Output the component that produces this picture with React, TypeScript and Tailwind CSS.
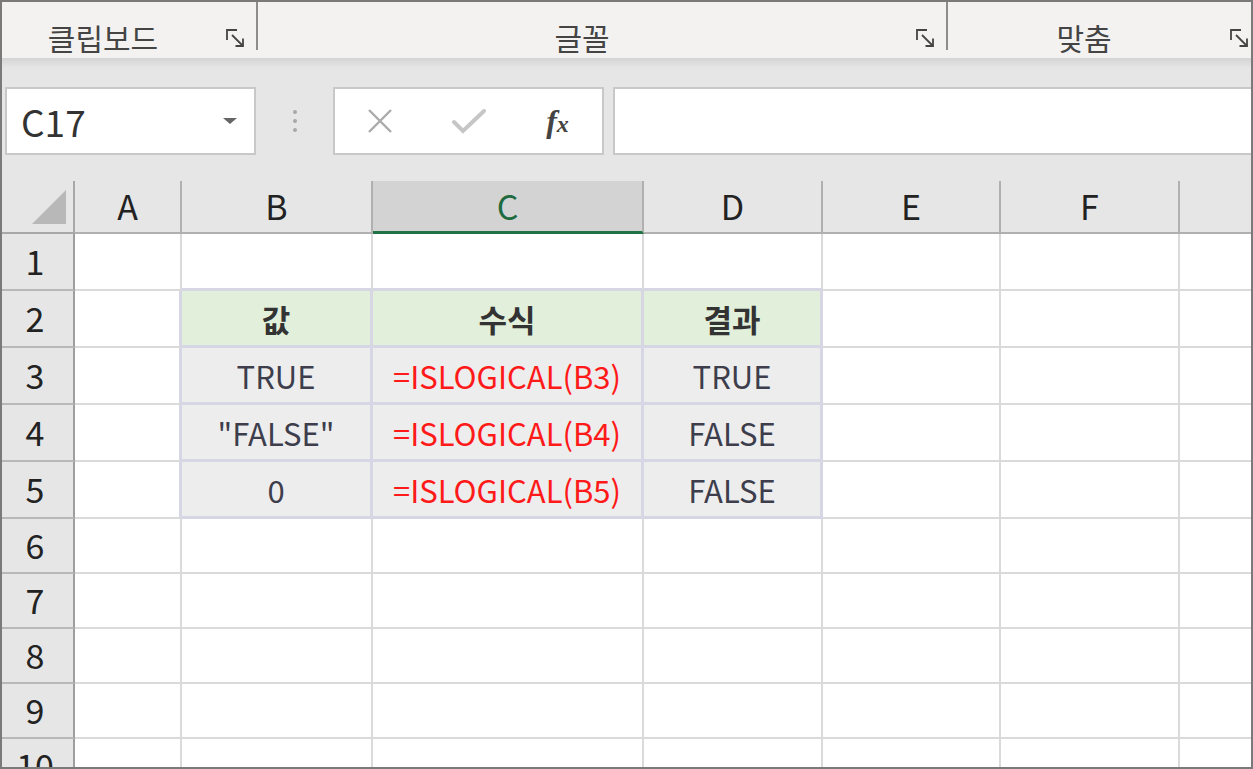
import React from 'react';

const FONT = "font-['Noto_Sans_CJK_KR',sans-serif]";

type Col = { key: string; label: string; w: string };

// G is only partly visible, so its letter sits off-screen in the reference
const COLS: Col[] = [
  { key: 'A', label: 'A', w: 'w-[107px]' },
  { key: 'B', label: 'B', w: 'w-[191px]' },
  { key: 'C', label: 'C', w: 'w-[271px]' },
  { key: 'D', label: 'D', w: 'w-[179px]' },
  { key: 'E', label: 'E', w: 'w-[178px]' },
  { key: 'F', label: 'F', w: 'w-[179px]' },
  { key: 'G', label: '', w: 'w-[179px]' },
];

const TABLE: Record<number, string[]> = {
  2: ['값', '수식', '결과'],
  3: ['TRUE', '=ISLOGICAL(B3)', 'TRUE'],
  4: ['"FALSE"', '=ISLOGICAL(B4)', 'FALSE'],
  5: ['0', '=ISLOGICAL(B5)', 'FALSE'],
};

const ROWS = [1, 2, 3, 4, 5, 6, 7, 8, 9, 10];

function Launcher() {
  return (
    <svg width="22" height="20" viewBox="0 0 22 20" fill="none" stroke="#444" strokeWidth="1.8">
      <path d="M2 12 V2 H12" />
      <path d="M7 7 L18 18" />
      <path d="M18 10.5 V18 H10.5" />
    </svg>
  );
}

function RibbonGroup({ label, className, labelPad = '' }: { label: string; className: string; labelPad?: string }) {
  return (
    <div className={`flex h-full shrink-0 items-center pt-[14px] ${className}`}>
      <div className={`flex-1 text-center text-[30px] leading-[36px] text-[#444] ${labelPad}`}>{label}</div>
      <div className="flex w-[40px] justify-center pt-[2px]">
        <Launcher />
      </div>
    </div>
  );
}

function Separator() {
  return <div className="h-[48px] w-[2px] shrink-0 self-start bg-[#8c8c8c]" />;
}

function FormulaBar() {
  return (
    <div className="h-[123px] bg-gradient-to-b from-[#d4d4d4] via-[#e6e6e6] via-[8%] to-[#e6e6e6] pt-[29px]">
      <div className="flex h-[68px]">
        <div className="ml-[3px] flex w-[251px] shrink-0 items-center justify-between border-2 border-[#c8c8c8] bg-white pl-[14px] pr-[16px]">
          <span className="text-[37px] leading-none text-[#333]">C17</span>
          <svg width="16" height="8" viewBox="0 0 16 8">
            <path d="M1 1 H15 L8 7 Z" fill="#666" />
          </svg>
        </div>
        <div className="flex w-[77px] shrink-0 flex-col items-center justify-center gap-[5px]">
          <span className="h-[4px] w-[4px] rounded-full bg-[#a8a8a8]" />
          <span className="h-[4px] w-[4px] rounded-full bg-[#a8a8a8]" />
          <span className="h-[4px] w-[4px] rounded-full bg-[#a8a8a8]" />
        </div>
        <div className="flex w-[271px] shrink-0 items-center border-2 border-[#c8c8c8] bg-white">
          <div className="flex w-[90px] justify-center">
            <svg width="28" height="28" viewBox="0 0 28 28" stroke="#ababab" strokeWidth="2.4">
              <path d="M3 3 L25 25 M25 3 L3 25" />
            </svg>
          </div>
          <div className="flex w-[90px] justify-center">
            <svg width="36" height="28" viewBox="0 0 36 28" fill="none" stroke="#c6c6c6" strokeWidth="4" strokeLinecap="round">
              <path d="M3 15 L12 24 L33 4" />
            </svg>
          </div>
          <div className="flex w-[90px] justify-center">
            <span className="font-['Liberation_Serif',serif] text-[32px] font-bold italic leading-none text-[#444]">
              f<span className="text-[24px]">x</span>
            </span>
          </div>
        </div>
        <div className="ml-[9px] flex-1 border-2 border-r-0 border-[#c8c8c8] bg-white" />
      </div>
    </div>
  );
}

function ColumnHeader() {
  return (
    <div className="flex h-[53px] overflow-hidden bg-[#e6e6e6]">
      <div className="flex w-[73px] shrink-0 items-end justify-end border-b-2 border-r-2 border-[#a8a8a8] pb-[8px] pr-[7px]">
        <svg width="34" height="34" viewBox="0 0 34 34">
          <path d="M34 0 V34 H0 Z" fill="#b8b8b8" />
        </svg>
      </div>
      {COLS.map((c) => {
        const sel = c.key === 'C';
        return (
          <div
            key={c.key}
            className={`flex shrink-0 items-center justify-center border-r-2 text-[34px] leading-none ${c.w} ${
              sel
                ? 'border-b-[3px] border-r-[#b0b0b0] border-b-[#217346] bg-[#d3d3d3] text-[#1f6b3f]'
                : 'border-b-2 border-[#b0b0b0] text-[#222]'
            }`}
          >
            <span className="-mt-[1px]">{c.label}</span>
          </div>
        );
      })}
    </div>
  );
}

function Cell({ row, col }: { row: number; col: number }) {
  const inTable = row >= 2 && row <= 5 && col >= 1 && col <= 3;
  const c = COLS[col];
  if (inTable) {
    const text = TABLE[row][col - 1];
    const head = row === 2;
    const formula = col === 2 && !head;
    return (
      <div
        className={`flex shrink-0 items-center justify-center border-b-[3px] border-r-[3px] border-[#d6d6e4] leading-none ${c.w} ${
          head ? 'bg-[#e2efda] text-[31px] font-bold text-[#333]' : 'bg-[#ededed] text-[31px] text-[#3d3d4c]'
        } ${formula ? 'text-[#ff1a1a]' : ''}`}
      >
        <span className="mt-[1px]">{text}</span>
      </div>
    );
  }
  const tableTopEdge = row === 1 && col >= 1 && col <= 3;
  const tableLeftEdge = col === 0 && row >= 2 && row <= 5;
  return (
    <div
      className={`shrink-0 border-b-2 border-r-2 border-[#dadada] bg-white ${c.w} ${
        tableTopEdge ? 'border-b-[3px] border-b-[#d6d6e4]' : ''
      } ${tableLeftEdge ? 'border-r-[3px] border-r-[#d6d6e4]' : ''}`}
    />
  );
}

export default function App() {
  return (
    <div className={`h-[769px] w-[1253px] overflow-hidden border-2 border-[#7a7a7a] bg-white ${FONT}`}>
      <div className="flex h-[56px] bg-[#f3f2f1]">
        <RibbonGroup label="클립보드" className="w-[254px]" labelPad="pr-[12px]" />
        <Separator />
        <RibbonGroup label="글꼴" className="w-[688px]" />
        <Separator />
        <RibbonGroup label="맞춤" className="w-[312px]" />
      </div>
      <FormulaBar />
      <ColumnHeader />
      {ROWS.map((r) => (
        <div key={r} className={`flex overflow-hidden ${r <= 5 ? 'h-[57px]' : 'h-[55px]'}`}>
          <div className="flex w-[73px] shrink-0 items-center justify-center border-b-2 border-r-2 border-b-[#b8b8b8] border-r-[#9e9e9e] bg-[#e6e6e6] pr-[5px] text-[34px] leading-none text-[#222]">
            <span className="-mt-[2px]">{r}</span>
          </div>
          {COLS.map((c, i) => (
            <Cell key={c.key} row={r} col={i} />
          ))}
        </div>
      ))}
    </div>
  );
}
